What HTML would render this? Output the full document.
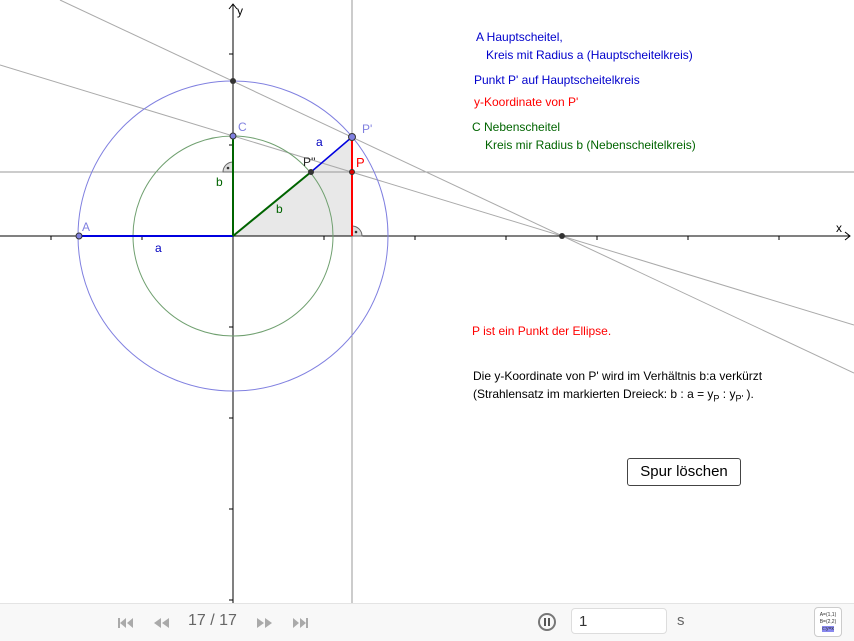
<!DOCTYPE html>
<html><head><meta charset="utf-8"><style>
body{margin:0;width:854px;height:640px;overflow:hidden;background:#fff;font-family:"Liberation Sans",sans-serif;position:relative}
svg{position:absolute;left:0;top:0}
.t{position:absolute;font-size:12px;white-space:nowrap}
.bar{position:absolute;left:0;top:603px;width:854px;height:37px;background:#f8f8f8;border-top:1px solid #e4e4e4}
</style></head><body>
<svg width="854" height="603" viewBox="0 0 854 603">
<polygon points="233,236 352,137 352,236" fill="#e8e8e8"/>
<line x1="0" y1="236" x2="850" y2="236" stroke="#000" stroke-width="1"/>
<polyline points="845,232 850,236 845,240" fill="none" stroke="#000"/>
<line x1="233" y1="603" x2="233" y2="4" stroke="#000"/>
<polyline points="229,9 233,4 237,9" fill="none" stroke="#000"/>
<g stroke="#000">
<line x1="51" y1="236" x2="51" y2="240"/><line x1="142" y1="236" x2="142" y2="240"/>
<line x1="324" y1="236" x2="324" y2="240"/><line x1="415" y1="236" x2="415" y2="240"/>
<line x1="506" y1="236" x2="506" y2="240"/><line x1="597" y1="236" x2="597" y2="240"/>
<line x1="688" y1="236" x2="688" y2="240"/><line x1="779" y1="236" x2="779" y2="240"/>
<line x1="229" y1="54" x2="233" y2="54"/><line x1="229" y1="145" x2="233" y2="145"/>
<line x1="229" y1="327" x2="233" y2="327"/><line x1="229" y1="418" x2="233" y2="418"/>
<line x1="229" y1="509" x2="233" y2="509"/><line x1="229" y1="600" x2="233" y2="600"/>
</g>
<line x1="0" y1="172" x2="854" y2="172" stroke="#999"/>
<line x1="352" y1="0" x2="352" y2="603" stroke="#999"/>
<line x1="60" y1="0" x2="854" y2="373" stroke="#aaa"/>
<line x1="0" y1="65" x2="854" y2="325" stroke="#aaa"/>
<circle cx="233" cy="236" r="155" fill="none" stroke="#8080e0"/>
<circle cx="233" cy="236" r="100" fill="none" stroke="#70a070"/>
<path d="M233,172 L233,162 A10,10 0 0 0 223,172 Z" fill="#ddd" stroke="#666"/>
<circle cx="228" cy="168" r="1.3" fill="#333"/>
<path d="M352,236 L352,226 A10,10 0 0 1 362,236 Z" fill="#ddd" stroke="#666"/>
<circle cx="356" cy="232" r="1.3" fill="#333"/>
<line x1="79" y1="236" x2="233" y2="236" stroke="#0000e0" stroke-width="2"/>
<line x1="233" y1="236" x2="233" y2="136" stroke="#006400" stroke-width="2"/>
<line x1="233" y1="236" x2="311" y2="172" stroke="#006400" stroke-width="2"/>
<line x1="311" y1="172" x2="352" y2="137" stroke="#0000e0" stroke-width="1.5"/>
<line x1="352" y1="137" x2="352" y2="236" stroke="#f00" stroke-width="2"/>
<circle cx="79" cy="236" r="3" fill="#8080e0" stroke="#333"/>
<circle cx="233" cy="136" r="3" fill="#8080e0" stroke="#333"/>
<circle cx="352" cy="137" r="3.5" fill="#8080e0" stroke="#333"/>
<circle cx="233" cy="81" r="3" fill="#333"/>
<circle cx="311" cy="172" r="3" fill="#333"/>
<circle cx="352" cy="172" r="2.5" fill="#d00" stroke="#333"/>
<circle cx="562" cy="236" r="3" fill="#333"/>
<g font-family="Liberation Sans" font-size="12">
<text x="237" y="15">y</text><text x="836" y="232">x</text>
<text x="82" y="231" fill="#8080e0">A</text>
<text x="238" y="131" fill="#8080e0">C</text>
<text x="362" y="133" fill="#8080e0">P'</text>
<text x="303" y="166" fill="#222">P''</text>
<text x="356" y="167" fill="#f00" font-size="13">P</text>
<text x="316" y="146" fill="#0000c0">a</text>
<text x="155" y="252" fill="#0000c0">a</text>
<text x="276" y="213" fill="#006400">b</text>
<text x="216" y="186" fill="#006400">b</text>
</g>
</svg>
<div class="t" style="left:476px;top:30px;color:#00c">A Hauptscheitel,</div>
<div class="t" style="left:486px;top:48px;color:#00c">Kreis mit Radius a (Hauptscheitelkreis)</div>
<div class="t" style="left:474px;top:73px;color:#00c">Punkt P' auf Hauptscheitelkreis</div>
<div class="t" style="left:474px;top:95px;color:#f00">y-Koordinate von P'</div>
<div class="t" style="left:472px;top:120px;color:#006400">C Nebenscheitel</div>
<div class="t" style="left:485px;top:138px;color:#006400">Kreis mir Radius b (Nebenscheitelkreis)</div>
<div class="t" style="left:472px;top:324px;color:#f00">P ist ein Punkt der Ellipse.</div>
<div class="t" style="left:473px;top:369px;color:#000">Die y-Koordinate von P' wird im Verhältnis b:a verkürzt</div>
<div class="t" style="left:473px;top:387px;color:#000">(Strahlensatz im markierten Dreieck: b : a = y<sub style="font-size:9px">P</sub> : y<sub style="font-size:9px">P'</sub> ).</div>
<div style="position:absolute;left:627px;top:458px;width:112px;height:26px;border:1px solid #444;border-radius:3px;background:#fff;font-size:15px;text-align:center;line-height:26px">Spur löschen</div>
<div class="bar">
<svg width="320" height="37" style="position:absolute;left:0;top:0">
<g fill="#aaa">
<rect x="118" y="14" width="2" height="10"/><polygon points="126,14 120,19 126,24"/><polygon points="133,14 127,19 133,24"/>
<polygon points="161,14 154,19 161,24"/><polygon points="169,14 162,19 169,24"/>
<polygon points="257,14 264,19 257,24"/><polygon points="265,14 272,19 265,24"/>
<polygon points="293,14 299,19 293,24"/><polygon points="300,14 306,19 300,24"/><rect x="306" y="14" width="2" height="10"/>
</g>
</svg>
<div style="position:absolute;left:188px;top:8px;color:#666;font-size:16px">17 / 17</div>
<div style="position:absolute;left:538px;top:9px;width:18px;height:18px;border:2px solid #777;border-radius:50%;box-sizing:border-box"><div style="position:absolute;left:4px;top:3px;width:2px;height:8px;background:#555"></div><div style="position:absolute;left:8px;top:3px;width:2px;height:8px;background:#555"></div></div>
<div style="position:absolute;left:571px;top:4px;width:96px;height:26px;border:1px solid #ddd;border-radius:4px;background:#fff;font-size:15px;line-height:26px;padding-left:7px;box-sizing:border-box;color:#333">1</div>
<div style="position:absolute;left:677px;top:8px;color:#666;font-size:15px">s</div>
<div style="position:absolute;left:814px;top:3px;width:28px;height:30px;border:1px solid #ccc;border-radius:4px;background:#fff;font-size:5px;line-height:7px;text-align:center;color:#333;padding-top:4px;box-sizing:border-box">A=(1,1)<br>B=(2,2)<br><span style="background:#88e">c:y=x</span></div>
</div>
</body></html>
